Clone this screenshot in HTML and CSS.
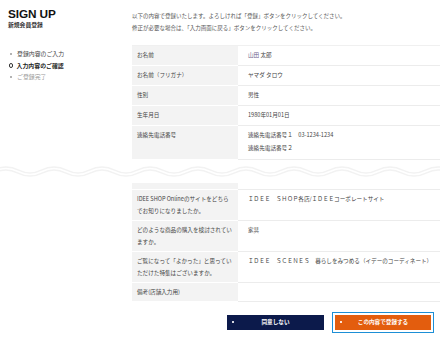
FILE: index.html
```html
<!DOCTYPE html>
<html lang="ja">
<head>
<meta charset="utf-8">
<link rel="stylesheet" href="styles.css">
</head>
<body>
<div class="page">
  <div class="top">
    <aside class="side">
      <h1 class="title">SIGN UP</h1>
      <div class="subtitle">新規会員登録</div>
      <ul class="steps">
        <li class="step done"><span class="dot"></span>登録内容のご入力</li>
        <li class="step current"><span class="ring"></span>入力内容のご確認</li>
        <li class="step todo"><span class="dot"></span>ご登録完了</li>
      </ul>
    </aside>
    <main class="main">
      <div class="intro">
        <p>以下の内容で登録いたします。よろしければ「登録」ボタンをクリックしてください。</p>
        <p>修正が必要な場合は、「入力画面に戻る」ボタンをクリックしてください。</p>
      </div>
      <div class="tbl t1">
        <div class="row"><div class="th">お名前</div><div class="td"><span class="hl">山田</span> 太郎</div></div>
        <div class="row"><div class="th">お名前（フリガナ）</div><div class="td">ヤマダ タロウ</div></div>
        <div class="row"><div class="th">性別</div><div class="td">男性</div></div>
        <div class="row"><div class="th">生年月日</div><div class="td">1980年01月01日</div></div>
        <div class="row"><div class="th">連絡先電話番号</div><div class="td"><div class="line">連絡先電話番号１　03-1234-1234</div><div class="line">連絡先電話番号２</div></div></div>
      </div>
    </main>
  </div>
  <div class="wave">
    <svg width="440" height="23" viewBox="0 0 440 23">
      <path d="M-6 11.5 q12 -6 24 0 t24 0 t24 0 t24 0 t24 0 t24 0 t24 0 t24 0 t24 0 t24 0 t24 0 t24 0 t24 0 t24 0 t24 0 t24 0 t24 0 t24 0 t24 0 t24 0" fill="none" stroke="#f2f2f2" stroke-width="4.5"/>
      <path d="M-6 11.5 q12 -6 24 0 t24 0 t24 0 t24 0 t24 0 t24 0 t24 0 t24 0 t24 0 t24 0 t24 0 t24 0 t24 0 t24 0 t24 0 t24 0 t24 0 t24 0 t24 0 t24 0" fill="none" stroke="#ffffff" stroke-width="1.5"/>
    </svg>
  </div>
  <div class="bottom">
    <div class="spacer"></div>
    <div class="main">
      <div class="tbl t2">
        <div class="row cut"><div class="th"></div><div class="td"></div></div>
        <div class="row"><div class="th">IDEE SHOP Onlineのサイトをどちら<br>でお知りになりましたか。</div><div class="td">ＩＤＥＥ　ＳＨＯＰ各店/ＩＤＥＥコーポレートサイト</div></div>
        <div class="row"><div class="th">どのような商品の購入を検討されてい<br>ますか。</div><div class="td">家具</div></div>
        <div class="row"><div class="th">ご覧になって「よかった」と思ってい<br>ただけた特集はございますか。</div><div class="td">ＩＤＥＥ　ＳＣＥＮＥＳ　暮らしをみつめる（イデーのコーディネート）</div></div>
        <div class="row"><div class="th">備考(店舗入力用)</div><div class="td"></div></div>
      </div>
      <div class="actions">
        <button class="btn navy" type="button"><span class="bdot"></span>同意しない</button>
        <button class="btn orange" type="button"><span class="bdot"></span>この内容で登録する</button>
      </div>
    </div>
  </div>
  <div class="footer"></div>
</div>
</body>
</html>
```

FILE: styles.css
```css
html, body {
  margin: 0;
  padding: 0;
  background: #fff;
}
body {
  width: 440px;
  height: 345px;
  overflow: hidden;
  font-family: "Noto Sans CJK JP", "Liberation Sans", sans-serif;
  color: #444;
}
.page {
  display: flex;
  flex-direction: column;
}
.top, .bottom {
  display: flex;
}
.side, .spacer {
  width: 132px;
  flex: none;
}
.side {
  padding: 7px 0 0 8px;
  box-sizing: border-box;
}
.title {
  margin: 0;
  font-family: "Liberation Sans", Arial, sans-serif;
  font-weight: 700;
  font-size: 11.8px;
  line-height: 14px;
  color: #111;
  letter-spacing: -0.1px;
}
.subtitle {
  font-size: 5.8px;
  line-height: 8px;
  font-weight: 700;
  color: #333;
}
.steps {
  list-style: none;
  margin: 19px 0 0 0;
  padding: 0;
}
.step {
  display: flex;
  align-items: center;
  font-size: 5.9px;
  line-height: 11.6px;
  height: 11.6px;
}
.step .dot {
  width: 2px;
  height: 2px;
  border-radius: 50%;
  background: #9a9a9a;
  margin: 0 5px 0 2px;
}
.step .ring {
  width: 2.5px;
  height: 2.5px;
  border-radius: 50%;
  border: 1.2px solid #333;
  margin: 0 3.6px 0 0.5px;
}
.step.done { color: #444; }
.step.current { color: #222; font-weight: 700; }
.step.todo { color: #999; }
.main {
  flex: 1;
  min-width: 0;
}
.intro {
  padding-top: 10px;
  font-size: 5.5px;
  line-height: 12px;
  color: #555;
}
.intro p {
  margin: 0;
  white-space: nowrap;
}
.tbl {
  font-size: 5.6px;
}
.t1 {
  margin-top: 11px;
  border-top: 1px solid #f0f0f0;
}
.row {
  display: flex;
}
.th {
  width: 106px;
  flex: none;
  box-sizing: border-box;
  background: #f3f3f3;
  border-bottom: 1px solid #fff;
  color: #444;
  padding: 6px 5px;
  white-space: nowrap;
}
.td {
  flex: 1;
  border-bottom: 1px solid #ececec;
  padding: 6px 10px;
  color: #444;
  white-space: nowrap;
}
.t1 .th, .t1 .td {
  line-height: 7px;
}
.t1 .line + .line {
  margin-top: 5.5px;
}
.t1 .row:last-child .th, .t1 .row:last-child .td {
  padding-bottom: 7px;
}
.hl { color: #6a5a8a; }
.t2 .th, .t2 .td {
  line-height: 12px;
  padding-top: 3px;
  padding-bottom: 3px;
}
.t2 .row.cut .th, .t2 .row.cut .td {
  height: 6px;
  padding: 0;
  line-height: 6px;
}
.t2 .row.cut .th { border-bottom: 0; }
.wave {
  height: 23px;
  line-height: 0;
}
.wave svg { display: block; }
.actions {
  display: flex;
  justify-content: flex-end;
  gap: 11px;
  padding: 13px 9px 0 0;
}
.btn {
  position: relative;
  width: 96px;
  height: 15px;
  border: 0;
  margin: 0;
  padding: 0;
  font-family: "Noto Sans CJK JP", sans-serif;
  font-size: 5.6px;
  font-weight: 700;
  color: #fff;
  display: flex;
  align-items: center;
  justify-content: center;
}
.btn .bdot {
  position: absolute;
  left: 5px;
  top: 6.5px;
  width: 1.6px;
  height: 1.6px;
  border-radius: 50%;
  background: #fff;
}
.navy {
  background: #0c1a4b;
  width: 97px;
}
.orange {
  background: #e35d0e;
  outline: 1.3px solid #1d8fd6;
  outline-offset: 2.6px;
}
.footer {
  margin-top: 15px;
  height: 1px;
  background: #eeeeee;
}
```
